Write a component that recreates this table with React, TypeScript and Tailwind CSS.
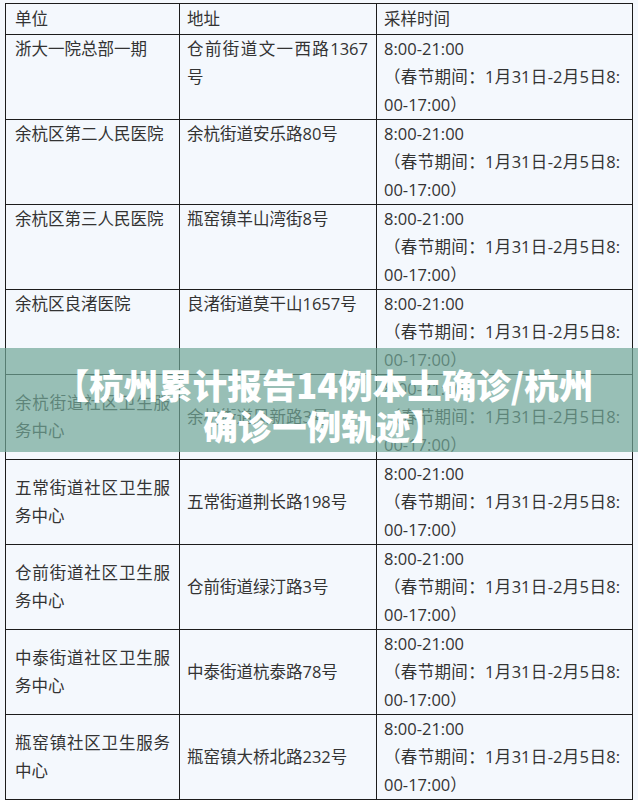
import React from 'react'

type Row = { name: string; addr: string; top?: boolean }

const ROWS: Row[] = [
  { name: '浙大一院总部一期', addr: '仓前街道文一西路1367号', top: true },
  { name: '余杭区第二人民医院', addr: '余杭街道安乐路80号', top: true },
  { name: '余杭区第三人民医院', addr: '瓶窑镇羊山湾街8号', top: true },
  { name: '余杭区良渚医院', addr: '良渚街道莫干山1657号', top: true },
  { name: '余杭街道社区卫生服务中心', addr: '余杭街道凤新路3号' },
  { name: '五常街道社区卫生服务中心', addr: '五常街道荆长路198号' },
  { name: '仓前街道社区卫生服务中心', addr: '仓前街道绿汀路3号' },
  { name: '中泰街道社区卫生服务中心', addr: '中泰街道杭泰路78号' },
  { name: '瓶窑镇社区卫生服务中心', addr: '瓶窑镇大桥北路232号' },
  { name: '闲林街道社区卫生服务中心', addr: '闲林街道闲兴路8号' },
]

const cell = 'border border-[#1c1c1c] py-0 text-justify'

export default function App() {
  return (
    <div
      className="relative h-[800px] overflow-hidden bg-[#f4f8fd] pt-[3px] pl-[5px] text-[16.5px] leading-[28px] text-[#333]"
      style={{ fontFamily: '"Open Sans", "Noto Sans CJK SC", sans-serif' }}
    >
      <table className="w-[627px] table-fixed border-collapse">
        <colgroup>
          <col className="w-[174px]" />
          <col className="w-[197px]" />
          <col className="w-[256px]" />
        </colgroup>
        <thead>
          <tr>
            <th className={`${cell} px-[9px] py-[1px] text-left font-normal`}>单位</th>
            <th className={`${cell} pl-[7px] pr-[8px] py-[1px] text-left font-normal`}>地址</th>
            <th className={`${cell} pl-[7px] pr-[12px] py-[1px] text-left font-normal`}>采样时间</th>
          </tr>
        </thead>
        <tbody>
          {ROWS.map((r) => (
            <tr key={r.name} className={r.top ? 'align-top' : 'align-middle'}>
              <td className={`${cell} px-[9px]`}>{r.name}</td>
              <td className={`${cell} pl-[7px] pr-[8px]`}>{r.addr}</td>
              <td className={`${cell} pl-[7px] pr-[12px] break-all`}>
                8:00-21:00
                <br />
                （春节期间：1月31日-2月5日8:00-17:00）
              </td>
            </tr>
          ))}
        </tbody>
      </table>

      {/* title banner laid over the table */}
      <div className="absolute left-0 right-0 top-[348px] flex h-[104px] items-center justify-center bg-[rgba(112,166,151,0.7)] pt-[10px] pl-[10px]">
        <p
          className="text-center text-[34.5px] font-black leading-[41px] text-white"
          style={{ fontFamily: '"Noto Sans CJK SC", sans-serif' }}
        >
          【杭州累计报告14例本土确诊/杭州
          <br />
          确诊一例轨迹】
        </p>
      </div>
    </div>
  )
}
